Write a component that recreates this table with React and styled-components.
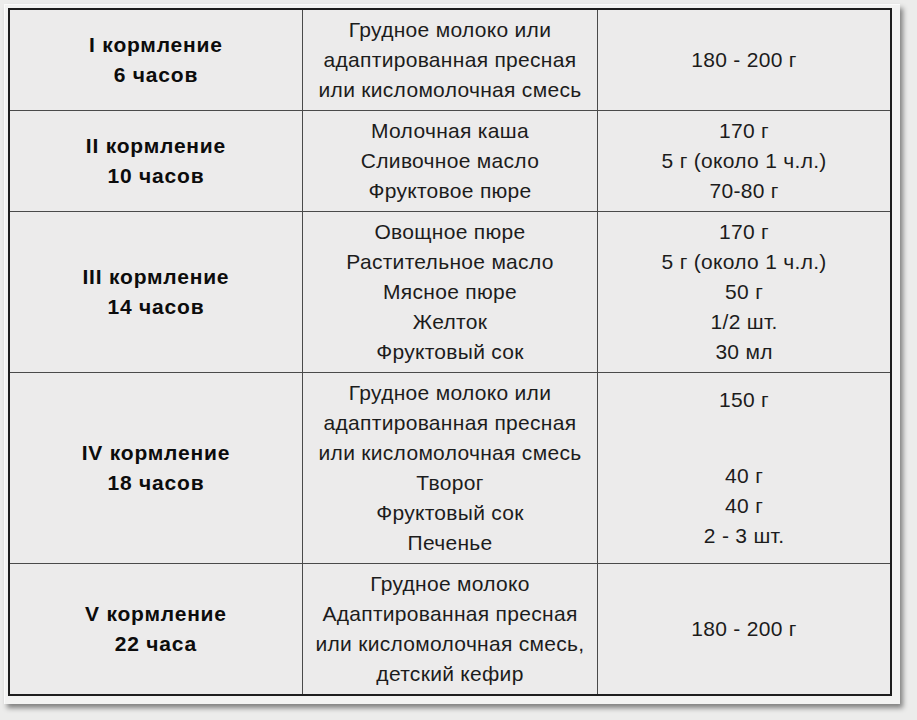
import React from "react";
import styled, { createGlobalStyle } from "styled-components";

const Global = createGlobalStyle`
  html, body { margin: 0; padding: 0; background: #ececeb; }
  body { font-family: "Liberation Sans", Arial, sans-serif; }
`;

const Page = styled.div`
  width: 917px;
  height: 720px;
  padding: 4px 0 0 4px;
  box-sizing: border-box;
  background: #ececeb;
`;

const Frame = styled.div`
  width: 896px;
  height: 700px;
  box-sizing: border-box;
  padding: 3px 9px 12px 3px;
  background: #f3f3f2;
  border-top: 1px solid #fbfbfb;
  border-left: 1px solid #fbfbfb;
  box-shadow: 3px 4px 5px rgba(0, 0, 0, 0.45);
`;

const Table = styled.table`
  width: 884px;
  border-collapse: collapse;
  table-layout: fixed;
  border: 2px solid #1e1e1e;
  background: #ecebeb;
`;

const Cell = styled.td`
  border: 1px solid #4a4a4a;
  padding: 5px 2px;
  text-align: center;
  vertical-align: middle;
  font-size: 21px;
  line-height: 30px;
  letter-spacing: ${(p) => (p.$bold ? "0.8px" : "0.3px")};
  color: ${(p) => (p.$bold ? "#0c0c0c" : "#1c1c1c")};
  font-weight: ${(p) => (p.$bold ? 700 : 400)};
  height: ${(p) => p.$h}px;
  box-sizing: border-box;
`;

const Line = styled.div`
  white-space: nowrap;
`;

const Gap = styled.div`
  height: ${(p) => p.$h}px;
`;

const rows = [
  {
    h: 100,
    title: ["I кормление", "6 часов"],
    items: ["Грудное молоко или", "адаптированная пресная", "или кисломолочная смесь"],
    amounts: ["180 - 200 г"],
  },
  {
    h: 101,
    title: ["II кормление", "10 часов"],
    items: ["Молочная каша", "Сливочное масло", "Фруктовое пюре"],
    amounts: ["170 г", "5 г (около 1 ч.л.)", "70-80 г"],
  },
  {
    h: 161,
    title: ["III кормление", "14 часов"],
    items: ["Овощное пюре", "Растительное масло", "Мясное пюре", "Желток", "Фруктовый сок"],
    amounts: ["170 г", "5 г (около 1 ч.л.)", "50 г", "1/2 шт.", "30 мл"],
  },
  {
    h: 191,
    title: ["IV кормление", "18 часов"],
    items: [
      "Грудное молоко или",
      "адаптированная пресная",
      "или кисломолочная смесь",
      "Творог",
      "Фруктовый сок",
      "Печенье",
    ],
    amounts: ["150 г", null, "40 г", "40 г", "2 - 3 шт."],
  },
  {
    h: 131,
    title: ["V кормление", "22 часа"],
    items: [
      "Грудное молоко",
      "Адаптированная пресная",
      "или кисломолочная смесь,",
      "детский кефир",
    ],
    amounts: ["180 - 200 г"],
  },
];

export default function App() {
  return (
    <Page>
      <Global />
      <Frame>
        <Table>
          <colgroup>
            <col style={{ width: 293 }} />
            <col style={{ width: 295 }} />
            <col style={{ width: 293 }} />
          </colgroup>
          <tbody>
            {rows.map((r, i) => (
              <tr key={i}>
                <Cell $bold $h={r.h}>
                  {r.title.map((t) => (
                    <Line key={t}>{t}</Line>
                  ))}
                </Cell>
                <Cell $h={r.h}>
                  {r.items.map((t) => (
                    <Line key={t}>{t}</Line>
                  ))}
                </Cell>
                <Cell $h={r.h}>
                  {r.amounts.map((t, j) =>
                    t === null ? <Gap key={j} $h={46} /> : <Line key={j}>{t}</Line>
                  )}
                </Cell>
              </tr>
            ))}
          </tbody>
        </Table>
      </Frame>
    </Page>
  );
}
